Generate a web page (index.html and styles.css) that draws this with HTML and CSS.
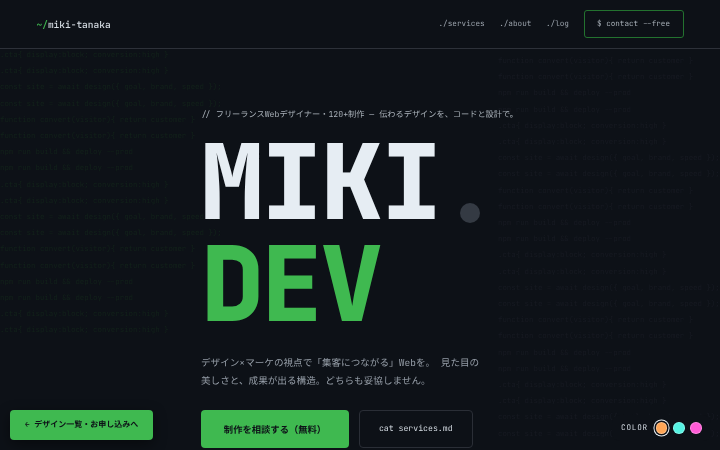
FILE: index.html
```html
<!DOCTYPE html>
<html lang="ja">
<head>
<meta charset="utf-8">
<title>miki-tanaka</title>
<link rel="stylesheet" href="styles.css">
</head>
<body>
<header class="nav">
  <div class="logo"><span class="logo-path">~/</span>miki-tanaka</div>
  <nav class="links">
    <a class="link">./services</a>
    <a class="link">./about</a>
    <a class="link">./log</a>
    <a class="contact">$ contact --free</a>
  </nav>
</header>
<div class="code code-left">
  <div>.cta{ display:block; conversion:high }</div>
  <div>.cta{ display:block; conversion:high }</div>
  <div>const site = await design({ goal, brand, speed });</div>
  <div>const site = await design({ goal, brand, speed });</div>
  <div>function convert(visitor){ return customer }</div>
  <div>function convert(visitor){ return customer }</div>
  <div>npm run build &amp;&amp; deploy --prod</div>
  <div>npm run build &amp;&amp; deploy --prod</div>
  <div>.cta{ display:block; conversion:high }</div>
  <div>.cta{ display:block; conversion:high }</div>
  <div>const site = await design({ goal, brand, speed });</div>
  <div>const site = await design({ goal, brand, speed });</div>
  <div>function convert(visitor){ return customer }</div>
  <div>function convert(visitor){ return customer }</div>
  <div>npm run build &amp;&amp; deploy --prod</div>
  <div>npm run build &amp;&amp; deploy --prod</div>
  <div>.cta{ display:block; conversion:high }</div>
  <div>.cta{ display:block; conversion:high }</div>
</div>
<div class="code code-right">
  <div>function convert(visitor){ return customer }</div>
  <div>function convert(visitor){ return customer }</div>
  <div>npm run build &amp;&amp; deploy --prod</div>
  <div>npm run build &amp;&amp; deploy --prod</div>
  <div>.cta{ display:block; conversion:high }</div>
  <div>.cta{ display:block; conversion:high }</div>
  <div>const site = await design({ goal, brand, speed });</div>
  <div>const site = await design({ goal, brand, speed });</div>
  <div>function convert(visitor){ return customer }</div>
  <div>function convert(visitor){ return customer }</div>
  <div>npm run build &amp;&amp; deploy --prod</div>
  <div>npm run build &amp;&amp; deploy --prod</div>
  <div>.cta{ display:block; conversion:high }</div>
  <div>.cta{ display:block; conversion:high }</div>
  <div>const site = await design({ goal, brand, speed });</div>
  <div>const site = await design({ goal, brand, speed });</div>
  <div>function convert(visitor){ return customer }</div>
  <div>function convert(visitor){ return customer }</div>
  <div>npm run build &amp;&amp; deploy --prod</div>
  <div>npm run build &amp;&amp; deploy --prod</div>
  <div>.cta{ display:block; conversion:high }</div>
  <div>.cta{ display:block; conversion:high }</div>
  <div>const site = await design({ goal, brand, speed });</div>
  <div>const site = await design({ goal, brand, speed });</div>
</div>
<main class="hero">
  <p class="eyebrow">// フリーランスWebデザイナー・120+制作 — 伝わるデザインを、コードと設計で。</p>
  <h1 class="title"><span class="title-a">MIKI</span><span class="title-b">DEV</span></h1>
  <p class="lead">デザイン×マーケの視点で「集客につながる」Webを。 見た目の<br>美しさと、成果が出る構造。どちらも妥協しません。</p>
  <div class="actions">
    <a class="btn btn-primary">制作を相談する（無料）</a>
    <a class="btn btn-ghost">cat services.md</a>
  </div>
</main>
<div class="cursor"></div>
<a class="float-btn">← デザイン一覧・お申し込みへ</a>
<div class="picker">
  <span class="picker-label">COLOR</span>
  <span class="swatch swatch-orange is-active"></span>
  <span class="swatch swatch-cyan"></span>
  <span class="swatch swatch-pink"></span>
</div>
</body>
</html>
```
FILE: styles.css
```css
* { box-sizing: border-box; margin: 0; padding: 0; }
html { background: #0d1117; }
html, body { width: 720px; height: 450px; overflow: hidden; }
body {
  background: #0d1117;
  color: #e6edf3;
  font-family: "JetBrains Mono", "Noto Sans CJK JP", monospace;
  position: relative;
  text-rendering: geometricPrecision;
  filter: blur(0.35px);
}
.nav {
  height: 49px;
  padding: 0 36.5px;
  display: flex;
  align-items: center;
  justify-content: space-between;
  border-bottom: 1px solid #2d3139;
}
.logo { font-size: 9.5px; color: #d5dce3; font-weight: 500; }
.logo-path { color: #3fb950; }
.links { display: flex; align-items: center; gap: 14.5px; }
.link { font-size: 7.7px; color: #9aa2ab; }
.contact {
  font-size: 7.6px;
  color: #a8b0b8;
  border: 1px solid #23722f;
  border-radius: 3px;
  height: 28px;
  width: 100px;
  display: flex;
  align-items: center;
  justify-content: center;
}
.code {
  position: absolute;
  font-size: 7.4px;
  line-height: 16.2px;
}
.code div { white-space: pre; }
.code-left { left: 0; top: 47px; color: #12221a; }
.code-right { left: 498px; top: 53px; color: #171a22; }
.hero { position: relative; padding: 58px 0 0 201px; }
.eyebrow { font-size: 8.2px; line-height: 16px; color: #a8b0b8; }
.title {
  display: flex;
  flex-direction: column;
  font-size: 104px;
  line-height: 102px;
  font-weight: 800;
  letter-spacing: -2.6px;
  margin-top: 9px;
}
.title-a { color: #e6edf3; }
.title-b { color: #3fb950; }
.lead {
  margin-top: 17.5px;
  font-size: 9.6px;
  line-height: 18.5px;
  color: #949ca6;
}
.actions { display: flex; gap: 10px; margin-top: 19.5px; }
.btn {
  height: 37.5px;
  border-radius: 4px;
  display: flex;
  align-items: center;
  justify-content: center;
}
.btn-primary { width: 148px; background: #3fb950; color: #0d1117; font-weight: 700; font-size: 9.3px; }
.btn-ghost { width: 113.5px; border: 1px solid #2a2e36; color: #d5dce3; font-size: 8.2px; }
.cursor {
  position: absolute;
  left: 460px;
  top: 203px;
  width: 20px;
  height: 20px;
  border-radius: 50%;
  background: #343a43;
}
.float-btn {
  position: absolute;
  left: 10px;
  top: 410px;
  width: 143px;
  height: 29.5px;
  border-radius: 4px;
  background: #3fb950;
  color: #0d1117;
  font-size: 8px;
  font-weight: 700;
  display: flex;
  align-items: center;
  justify-content: center;
  box-shadow: 0 4px 14px rgba(0, 0, 0, 0.45);
}
.picker {
  position: absolute;
  left: 612px;
  top: 415px;
  height: 26px;
  padding: 0 9px;
  display: flex;
  align-items: center;
  gap: 5.8px;
  background: #0d1117;
  border-radius: 8px;
}
.picker-label { font-size: 7.7px; letter-spacing: 0.78px; color: #d5dce3; margin-right: 2px; }
.swatch { width: 11.5px; height: 11.5px; border-radius: 50%; border: 1px solid rgba(255, 255, 255, 0.25); }
.swatch-orange { background: #ffa657; }
.swatch-cyan { background: #56f3e3; }
.swatch-pink { background: #ff5bd6; }
.is-active { box-shadow: 0 0 0 1.5px #0d1117, 0 0 0 2.5px #e6edf3; }
```
